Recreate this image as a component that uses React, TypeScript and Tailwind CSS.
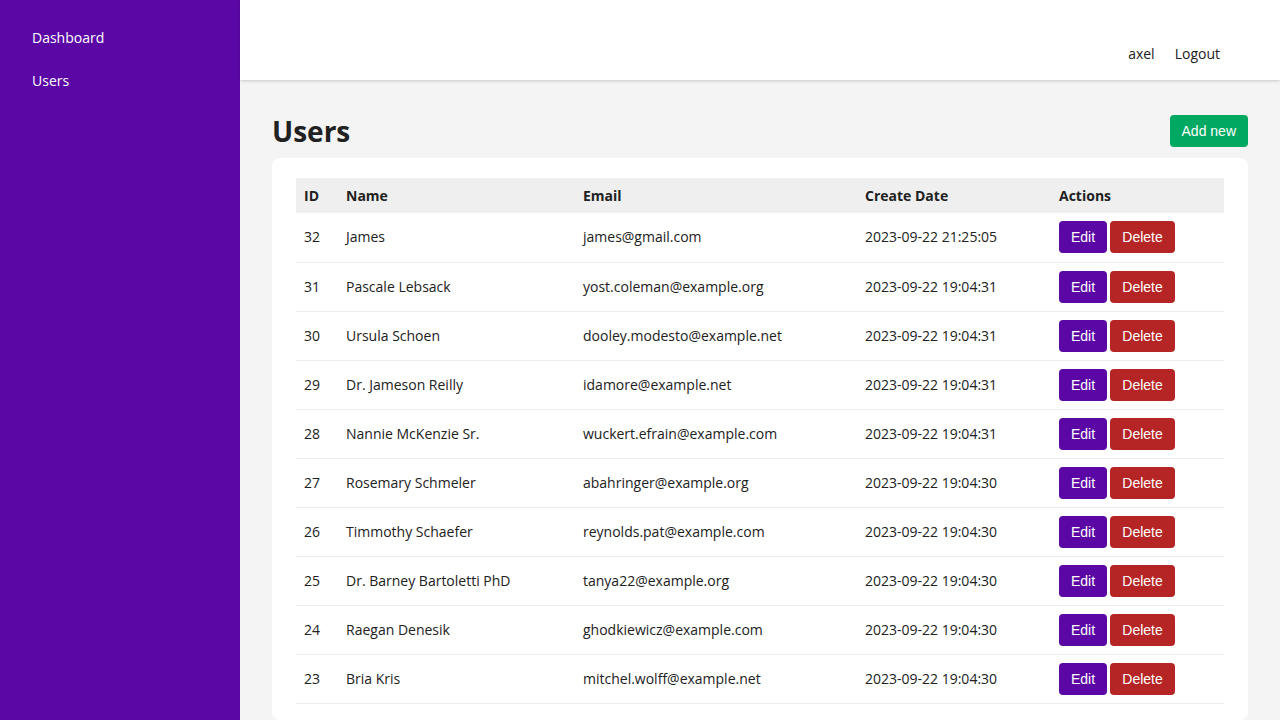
import React from "react";

type User = { id: number; name: string; email: string; created: string };

const users: User[] = [
  { id: 32, name: "James", email: "james@gmail.com", created: "2023-09-22 21:25:05" },
  { id: 31, name: "Pascale Lebsack", email: "yost.coleman@example.org", created: "2023-09-22 19:04:31" },
  { id: 30, name: "Ursula Schoen", email: "dooley.modesto@example.net", created: "2023-09-22 19:04:31" },
  { id: 29, name: "Dr. Jameson Reilly", email: "idamore@example.net", created: "2023-09-22 19:04:31" },
  { id: 28, name: "Nannie McKenzie Sr.", email: "wuckert.efrain@example.com", created: "2023-09-22 19:04:31" },
  { id: 27, name: "Rosemary Schmeler", email: "abahringer@example.org", created: "2023-09-22 19:04:30" },
  { id: 26, name: "Timmothy Schaefer", email: "reynolds.pat@example.com", created: "2023-09-22 19:04:30" },
  { id: 25, name: "Dr. Barney Bartoletti PhD", email: "tanya22@example.org", created: "2023-09-22 19:04:30" },
  { id: 24, name: "Raegan Denesik", email: "ghodkiewicz@example.com", created: "2023-09-22 19:04:30" },
  { id: 23, name: "Bria Kris", email: "mitchel.wolff@example.net", created: "2023-09-22 19:04:30" },
];

export default function App() {
  return (
    <div className="flex min-h-screen font-['Open_Sans',sans-serif] text-sm text-[#212121]">
      <aside className="w-[240px] shrink-0 bg-[#5b07a5] pt-[16px] text-white">
        <a className="block px-8 py-[11px] leading-[21px]">Dashboard</a>
        <a className="block px-8 py-[11px] leading-[21px]">Users</a>
      </aside>

      <div className="flex flex-1 flex-col bg-[#f4f4f4]">
        <header className="flex h-20 items-end justify-end gap-5 bg-white px-[60px] pb-4 shadow-[0_1px_3px_rgba(0,0,0,0.18)]">
          <span>axel</span>
          <a>Logout</a>
        </header>

        <main className="px-8 pt-[35px]">
          <div className="mb-[11px] flex items-center justify-between">
            <h1 className="text-[28px] leading-[32px] font-bold">Users</h1>
            <button className="h-8 rounded bg-[#00a862] px-3 font-['Liberation_Sans',sans-serif] text-sm text-white">
              Add new
            </button>
          </div>

          <div className="rounded-lg bg-white px-6 pt-5 pb-4">
            <table className="w-full border-collapse text-left">
              <thead>
                <tr className="h-[35px] bg-[#efefef] font-bold">
                  <th className="w-[42px] px-2">ID</th>
                  <th className="w-[237px] px-2">Name</th>
                  <th className="w-[282px] px-2">Email</th>
                  <th className="w-[194px] px-2">Create Date</th>
                  <th className="px-2">Actions</th>
                </tr>
              </thead>
              <tbody>
                {users.map((u) => (
                  <tr key={u.id} className="h-[49px] border-b border-[#ececec]">
                    <td className="px-2">{u.id}</td>
                    <td className="px-2">{u.name}</td>
                    <td className="px-2">{u.email}</td>
                    <td className="px-2">{u.created}</td>
                    <td className="px-2">
                      <div className="flex gap-[3px] font-['Liberation_Sans',sans-serif]">
                        <button className="h-8 w-12 rounded bg-[#5b07a5] text-white">Edit</button>
                        <button className="h-8 w-[65px] rounded bg-[#b52525] text-white">Delete</button>
                      </div>
                    </td>
                  </tr>
                ))}
              </tbody>
            </table>
          </div>
        </main>
      </div>
    </div>
  );
}
